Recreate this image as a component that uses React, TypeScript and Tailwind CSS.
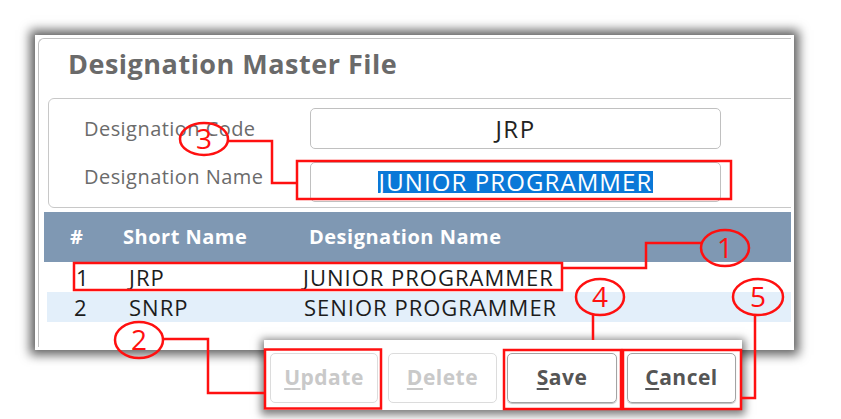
import React from "react";

const font = { fontFamily: '"Open Sans", "Liberation Sans", sans-serif' };

function Btn({ label, disabled, w }: { label: string; disabled?: boolean; w: string }) {
  const first = label.slice(0, 1);
  const rest = label.slice(1);
  return (
    <button
      className={
        "h-[50px] rounded-[5px] border text-[21px] font-bold tracking-[0.5px] " +
        w +
        (disabled
          ? " border-[#dcdcdc] text-[#c9c9c9]"
          : " border-[#a3a3a3] text-[#555555] shadow-[0_1px_1px_rgba(0,0,0,0.25)]")
      }
    >
      <span className="underline underline-offset-[3px]">{first}</span>
      {rest}
    </button>
  );
}

function Annotations() {
  const red = "#ff1010";
  const circle = (cx: number, cy: number, rx: number, ry: number, n: string) => (
    <g>
      <ellipse cx={cx} cy={cy} rx={rx} ry={ry} fill="none" stroke={red} strokeWidth={2.5} />
      <text
        x={cx}
        y={cy + 10}
        textAnchor="middle"
        fontSize={28}
        fill={red}
        fontFamily='"Open Sans", sans-serif'
      >
        {n}
      </text>
    </g>
  );
  return (
    <svg className="absolute left-0 top-0 pointer-events-none" width={841} height={419}>
      <g fill="none" stroke={red} strokeWidth={2.5}>
        <rect x={297} y={161} width={434} height={38} />
        <rect x={74} y={263} width={488} height={27} />
        <rect x={265} y={349.5} width={116} height={59} />
        <rect x={504} y={350} width={117} height={59} />
        <rect x={623} y={350} width={118} height={59} />
        <polyline points="701,243 646,243 646,268 562,268" />
        <polyline points="228,141 272,141 272,183 297,183" />
        <polyline points="163,339 208,339 208,393 265,393" />
        <polyline points="593,315 593,340" />
        <polyline points="755,315 755,398 741,398" />
      </g>
      {circle(725, 248, 24, 18, "1")}
      {circle(139, 340, 24, 18, "2")}
      {circle(204, 139, 24, 16, "3")}
      {circle(600, 297, 24, 18, "4")}
      {circle(758, 297, 25, 18, "5")}
    </svg>
  );
}

export default function App() {
  return (
    <div className="relative w-[841px] h-[419px] bg-white overflow-hidden" style={font}>
      <div className="pl-[35px] pt-[35px]">
        <div className="w-[759px] h-[315px] bg-white p-[3px] shadow-[0_0_10px_5px_rgba(0,0,0,0.62)] overflow-hidden">
          <div className="h-full border border-b-0 border-r-0 border-[#c2c2c2] rounded-tl-[6px] overflow-hidden">
            <div className="h-[59px] flex items-center pl-[29px] pb-[8px]">
              <h1 className="text-[27px] font-bold text-[#6a6a6a] tracking-[0.5px]">Designation Master File</h1>
            </div>

            <div className="ml-[9px] w-[800px] h-[110px] border border-[#c8c8c8] rounded-[6px] pl-[35px] pt-[9px] flex flex-col gap-[13px]">
              <div className="flex items-center">
                <label className="w-[226px] text-[20px] text-[#6b6b6b] tracking-[0.45px]">Designation Code</label>
                <div className="w-[411px] h-[41px] rounded-[5px] border border-[#c0c0c0] flex items-center justify-center text-[24px] tracking-[1.5px] text-[#222222]">
                  JRP
                </div>
              </div>
              <div className="flex items-center">
                <label className="w-[226px] mb-[10px] text-[20px] text-[#6b6b6b] tracking-[0.45px]">Designation Name</label>
                <div className="w-[411px] h-[40px] rounded-[5px] border border-[#c0c0c0] flex items-center justify-center text-[24px] tracking-[1.1px]">
                  <span className="bg-[#0a78d7] text-white px-[1px] leading-[22px]">JUNIOR PROGRAMMER</span>
                </div>
              </div>
            </div>

            <div className="ml-[5px] mt-[4px] w-[760px]">
              <div className="h-[50px] bg-[#7f98b3] flex items-center text-white font-bold text-[20px] tracking-[0.5px]">
                <div className="w-[79px] pl-[26px]">#</div>
                <div className="w-[186px]">Short Name</div>
                <div>Designation Name</div>
              </div>
              <div className="h-[30px] flex items-center text-[22px] text-[#1c1c1c] tracking-[1px]">
                <div className="w-[79px] pl-[32px]">1</div>
                <div className="w-[180px] pl-[6px]">JRP</div>
                <div>JUNIOR PROGRAMMER</div>
              </div>
              <div className="h-[30px] ml-[3px] bg-[#e3effa] flex items-center text-[22px] text-[#1c1c1c] tracking-[1px]">
                <div className="w-[76px] pl-[27px]">2</div>
                <div className="w-[181px] pl-[6px]">SNRP</div>
                <div>SENIOR PROGRAMMER</div>
              </div>
            </div>
          </div>
        </div>
      </div>

      <div className="absolute left-[264px] top-[340px] w-[478px] h-[70px] bg-white shadow-[0_2px_8px_3px_rgba(0,0,0,0.5)] pl-[6px] pt-[13px] flex gap-[10px]">
        <Btn label="Update" disabled w="w-[108px]" />
        <Btn label="Delete" disabled w="w-[109px]" />
        <Btn label="Save" w="w-[110px]" />
        <Btn label="Cancel" w="w-[109px]" />
      </div>

      <Annotations />
    </div>
  );
}
